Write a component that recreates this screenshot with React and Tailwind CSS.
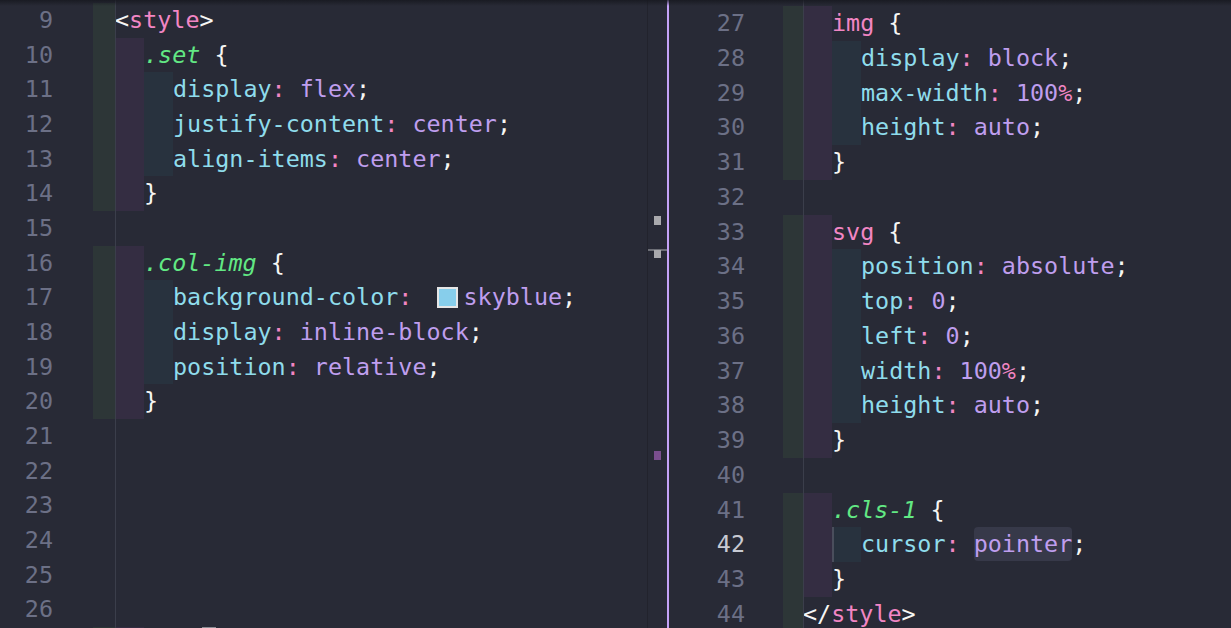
import React from "react";

const C = {
  w: "text-[#f6f6f4]",
  pink: "text-[#f286c4]",
  green: "text-[#62e884]",
  cyan: "text-[#8fdcec]",
  purple: "text-[#bf9eee]",
};

const t = (s, c, extra) => ({ s, c, extra });
const prop = (p, v, unit) => {
  const toks = [t(p, C.cyan), t(":", C.pink), t(" ", C.w)];
  toks.push(t(v, C.purple));
  if (unit) toks.push(t(unit, C.pink));
  toks.push(t(";", C.w));
  return toks;
};

const leftLines = [
  { n: 9, lv: 1, toks: [t("<", C.w), t("style", C.pink), t(">", C.w)] },
  { n: 10, lv: 2, toks: [t(".set", C.green, "italic"), t(" {", C.w)] },
  { n: 11, lv: 3, toks: prop("display", "flex") },
  { n: 12, lv: 3, toks: prop("justify-content", "center") },
  { n: 13, lv: 3, toks: prop("align-items", "center") },
  { n: 14, lv: 2, toks: [t("}", C.w)] },
  { n: 15, lv: 0, toks: [] },
  { n: 16, lv: 2, toks: [t(".col-img", C.green, "italic"), t(" {", C.w)] },
  { n: 17, lv: 3, swatch: true, toks: [] },
  { n: 18, lv: 3, toks: prop("display", "inline-block") },
  { n: 19, lv: 3, toks: prop("position", "relative") },
  { n: 20, lv: 2, toks: [t("}", C.w)] },
  { n: 21, lv: 0, toks: [] },
  { n: 22, lv: 0, toks: [] },
  { n: 23, lv: 0, toks: [] },
  { n: 24, lv: 0, toks: [] },
  { n: 25, lv: 0, toks: [] },
  { n: 26, lv: 0, toks: [] },
  { n: "", lv: 2, toks: [] },
];

const rightLines = [
  { n: 27, lv: 2, toks: [t("img", C.pink), t(" {", C.w)] },
  { n: 28, lv: 3, toks: prop("display", "block") },
  { n: 29, lv: 3, toks: prop("max-width", "100", "%") },
  { n: 30, lv: 3, toks: prop("height", "auto") },
  { n: 31, lv: 2, toks: [t("}", C.w)] },
  { n: 32, lv: 0, toks: [] },
  { n: 33, lv: 2, toks: [t("svg", C.pink), t(" {", C.w)] },
  { n: 34, lv: 3, toks: prop("position", "absolute") },
  { n: 35, lv: 3, toks: prop("top", "0") },
  { n: 36, lv: 3, toks: prop("left", "0") },
  { n: 37, lv: 3, toks: prop("width", "100", "%") },
  { n: 38, lv: 3, toks: prop("height", "auto") },
  { n: 39, lv: 2, toks: [t("}", C.w)] },
  { n: 40, lv: 0, toks: [] },
  { n: 41, lv: 2, toks: [t(".cls-1", C.green, "italic"), t(" {", C.w)] },
  { n: 42, lv: 3, cursor: true, toks: [] },
  { n: 43, lv: 2, toks: [t("}", C.w)] },
  { n: 44, lv: 1, toks: [t("</", C.w), t("style", C.pink), t(">", C.w)] },
];

function Tokens({ toks }) {
  return toks.map((k, i) => (
    <span key={i} className={`${k.c} ${k.extra || ""}`}>
      {k.s}
    </span>
  ));
}

function Line({ line, numW, gap, firstW, lh }) {
  const { n, lv } = line;
  return (
    <div className={`flex ${lh.h} shrink-0 items-stretch`}>
      <div
        className={`${numW} shrink-0 text-right ${lh.l} ${
          line.cursor ? "text-[#c8cad3]" : "text-[#6c7086]"
        }`}
      >
        {n}
      </div>
      <div className={`${gap} shrink-0`} />
      {lv >= 1 && <div className={`${firstW} shrink-0 bg-[#2d3637]`} />}
      {lv >= 2 && <div className="w-[29px] shrink-0 bg-[#342d42]" />}
      {lv >= 3 && (
        <div
          className={`w-[29px] shrink-0 bg-[#28323e] ${
            line.cursor ? "border-l-2 border-[#4a4e5c]" : ""
          }`}
        />
      )}
      <div className={`whitespace-pre ${lh.l}`}>
        {line.swatch ? (
          <>
            <span className={C.cyan}>background-color</span>
            <span className={C.pink}>:</span>
            <span> </span>
            <span className="ml-[10px] mr-[6px] inline-block h-[21px] w-[21px] border-2 border-[#e6e6e6] bg-[#87ceeb] align-[-3px]" />
            <span className={C.purple}>skyblue</span>
            <span className={C.w}>;</span>
          </>
        ) : line.cursor ? (
          <>
            <span className={C.cyan}>cursor</span>
            <span className={C.pink}>:</span>
            <span> </span>
            <span className={`${C.purple} rounded-[4px] bg-[#373949] py-[3px]`}>pointer</span>
            <span className={C.w}>;</span>
          </>
        ) : (
          <Tokens toks={line.toks} />
        )}
      </div>
    </div>
  );
}

const LEFT_LH = { h: "h-[34.67px]", l: "leading-[34.67px]" };
const RIGHT_LH = { h: "h-[34.76px]", l: "leading-[34.76px]" };

export default function App() {
  return (
    <div
      className="relative flex h-[628px] w-[1231px] overflow-hidden bg-[#282a36] text-[23.4px]"
      style={{ fontFamily: '"DejaVu Sans Mono", "Liberation Mono", monospace' }}
    >
      {/* Left editor */}
      <div className="relative flex w-[647px] shrink-0 flex-col overflow-hidden pt-[3px]">
        {leftLines.map((l, i) => (
          <Line key={i} line={l} lh={LEFT_LH} numW="w-[53px]" gap="w-[40px]" firstW="w-[22px]" />
        ))}
        <div className="absolute left-[115px] top-0 h-full w-px bg-[#3b3e4b]" />
        <div className="absolute bottom-0 left-[202px] h-px w-[14px] bg-[#8a8c94]" />
      </div>

      {/* split border */}
      <div className="w-px shrink-0 bg-[#22232d]" />

      {/* overview ruler */}
      <div className="relative w-[19px] shrink-0">
        <div className="absolute left-[6px] top-[216px] h-[9px] w-[7px] bg-[#a9a9ad]" />
        <div className="absolute left-0 top-[249px] h-[2px] w-[19px] bg-[#6c6e76]" />
        <div className="absolute left-[6px] top-[250px] h-[8px] w-[7px] bg-[#a9a9ad]" />
        <div className="absolute left-[6px] top-[451px] h-[9px] w-[7px] bg-[#7a4e8e]" />
      </div>

      {/* active group line */}
      <div className="w-[2px] shrink-0 bg-[#c4a2f7]" />

      {/* Right editor */}
      <div className="relative flex flex-1 flex-col overflow-hidden pt-[6px]">
        {rightLines.map((l, i) => (
          <Line key={i} line={l} lh={RIGHT_LH} numW="w-[76px]" gap="w-[38px]" firstW="w-[20px]" />
        ))}
        <div className="absolute left-[134px] top-0 h-full w-px bg-[#3b3e4b]" />
      </div>

      {/* top scroll shadow */}
      <div className="pointer-events-none absolute left-0 top-0 h-[6px] w-full bg-gradient-to-b from-[#16171e] to-transparent opacity-80" />
    </div>
  );
}
